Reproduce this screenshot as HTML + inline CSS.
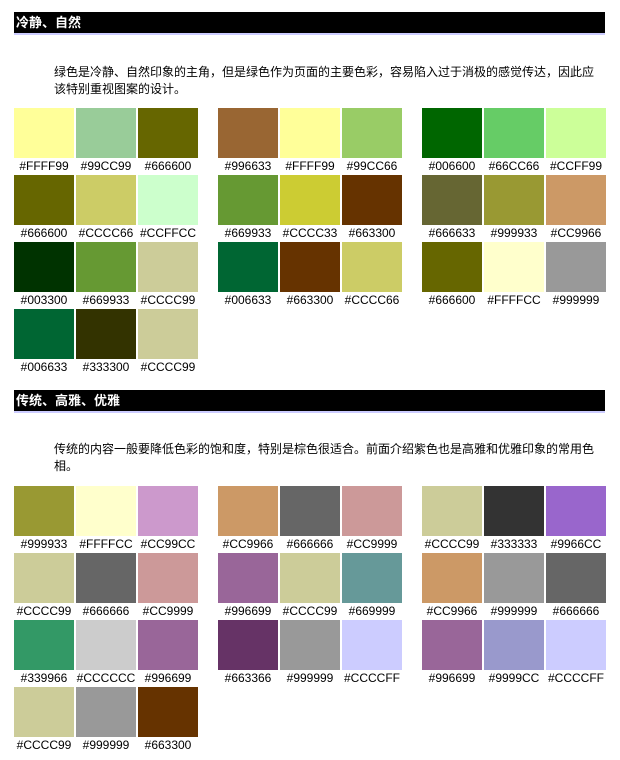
<!DOCTYPE html>
<html><head><meta charset="utf-8"><style>
body{margin:0;background:#fff;width:620px;height:760px;position:relative;font-family:"Liberation Sans","Noto Sans CJK SC",sans-serif;overflow:hidden}
.h{position:absolute;left:14px;width:589px;height:21px;background:#000;border-bottom:2px solid #ccccff;color:#fff;font-weight:bold;font-size:13px;line-height:21px;padding-left:2px;box-sizing:content-box}
.p{position:absolute;left:54px;width:550px;font-size:12px;line-height:17px;color:#000}
.g{position:absolute;width:186px;display:flex;flex-wrap:wrap;gap:0 2px}
.c{width:60px;height:67px}
.c i{display:block;height:50px}
.c span{display:block;text-align:center;font-size:12px;line-height:17px;color:#000}
</style></head><body>
<div class="h" style="top:12px">冷静、自然</div>
<div class="p" style="top:64px">绿色是冷静、自然印象的主角，但是绿色作为页面的主要色彩，容易陷入过于消极的感觉传达，因此应该特别重视图案的设计。</div>
<div class="g" style="left:14px;top:108px">
<div class="c"><i style="background:#FFFF99"></i><span>#FFFF99</span></div><div class="c"><i style="background:#99CC99"></i><span>#99CC99</span></div><div class="c"><i style="background:#666600"></i><span>#666600</span></div>
<div class="c"><i style="background:#666600"></i><span>#666600</span></div><div class="c"><i style="background:#CCCC66"></i><span>#CCCC66</span></div><div class="c"><i style="background:#CCFFCC"></i><span>#CCFFCC</span></div>
<div class="c"><i style="background:#003300"></i><span>#003300</span></div><div class="c"><i style="background:#669933"></i><span>#669933</span></div><div class="c"><i style="background:#CCCC99"></i><span>#CCCC99</span></div>
<div class="c"><i style="background:#006633"></i><span>#006633</span></div><div class="c"><i style="background:#333300"></i><span>#333300</span></div><div class="c"><i style="background:#CCCC99"></i><span>#CCCC99</span></div>
</div>
<div class="g" style="left:218px;top:108px">
<div class="c"><i style="background:#996633"></i><span>#996633</span></div><div class="c"><i style="background:#FFFF99"></i><span>#FFFF99</span></div><div class="c"><i style="background:#99CC66"></i><span>#99CC66</span></div>
<div class="c"><i style="background:#669933"></i><span>#669933</span></div><div class="c"><i style="background:#CCCC33"></i><span>#CCCC33</span></div><div class="c"><i style="background:#663300"></i><span>#663300</span></div>
<div class="c"><i style="background:#006633"></i><span>#006633</span></div><div class="c"><i style="background:#663300"></i><span>#663300</span></div><div class="c"><i style="background:#CCCC66"></i><span>#CCCC66</span></div>
</div>
<div class="g" style="left:422px;top:108px">
<div class="c"><i style="background:#006600"></i><span>#006600</span></div><div class="c"><i style="background:#66CC66"></i><span>#66CC66</span></div><div class="c"><i style="background:#CCFF99"></i><span>#CCFF99</span></div>
<div class="c"><i style="background:#666633"></i><span>#666633</span></div><div class="c"><i style="background:#999933"></i><span>#999933</span></div><div class="c"><i style="background:#CC9966"></i><span>#CC9966</span></div>
<div class="c"><i style="background:#666600"></i><span>#666600</span></div><div class="c"><i style="background:#FFFFCC"></i><span>#FFFFCC</span></div><div class="c"><i style="background:#999999"></i><span>#999999</span></div>
</div>
<div class="h" style="top:390px">传统、高雅、优雅</div>
<div class="p" style="top:441px">传统的内容一般要降低色彩的饱和度，特别是棕色很适合。前面介绍紫色也是高雅和优雅印象的常用色相。</div>
<div class="g" style="left:14px;top:486px">
<div class="c"><i style="background:#999933"></i><span>#999933</span></div><div class="c"><i style="background:#FFFFCC"></i><span>#FFFFCC</span></div><div class="c"><i style="background:#CC99CC"></i><span>#CC99CC</span></div>
<div class="c"><i style="background:#CCCC99"></i><span>#CCCC99</span></div><div class="c"><i style="background:#666666"></i><span>#666666</span></div><div class="c"><i style="background:#CC9999"></i><span>#CC9999</span></div>
<div class="c"><i style="background:#339966"></i><span>#339966</span></div><div class="c"><i style="background:#CCCCCC"></i><span>#CCCCCC</span></div><div class="c"><i style="background:#996699"></i><span>#996699</span></div>
<div class="c"><i style="background:#CCCC99"></i><span>#CCCC99</span></div><div class="c"><i style="background:#999999"></i><span>#999999</span></div><div class="c"><i style="background:#663300"></i><span>#663300</span></div>
</div>
<div class="g" style="left:218px;top:486px">
<div class="c"><i style="background:#CC9966"></i><span>#CC9966</span></div><div class="c"><i style="background:#666666"></i><span>#666666</span></div><div class="c"><i style="background:#CC9999"></i><span>#CC9999</span></div>
<div class="c"><i style="background:#996699"></i><span>#996699</span></div><div class="c"><i style="background:#CCCC99"></i><span>#CCCC99</span></div><div class="c"><i style="background:#669999"></i><span>#669999</span></div>
<div class="c"><i style="background:#663366"></i><span>#663366</span></div><div class="c"><i style="background:#999999"></i><span>#999999</span></div><div class="c"><i style="background:#CCCCFF"></i><span>#CCCCFF</span></div>
</div>
<div class="g" style="left:422px;top:486px">
<div class="c"><i style="background:#CCCC99"></i><span>#CCCC99</span></div><div class="c"><i style="background:#333333"></i><span>#333333</span></div><div class="c"><i style="background:#9966CC"></i><span>#9966CC</span></div>
<div class="c"><i style="background:#CC9966"></i><span>#CC9966</span></div><div class="c"><i style="background:#999999"></i><span>#999999</span></div><div class="c"><i style="background:#666666"></i><span>#666666</span></div>
<div class="c"><i style="background:#996699"></i><span>#996699</span></div><div class="c"><i style="background:#9999CC"></i><span>#9999CC</span></div><div class="c"><i style="background:#CCCCFF"></i><span>#CCCCFF</span></div>
</div>
</body></html>
